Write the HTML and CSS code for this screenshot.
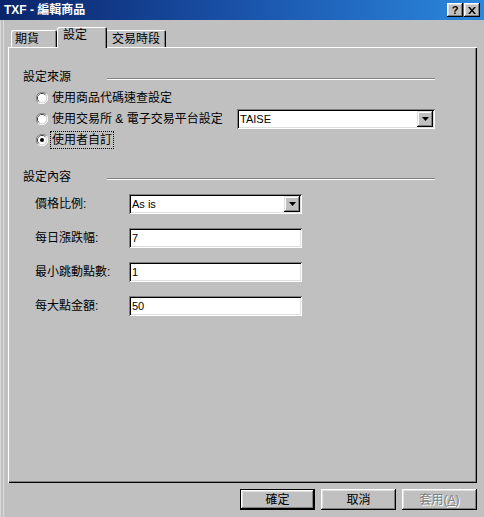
FILE: index.html
```html
<!DOCTYPE html>
<html lang="zh-Hant">
<head>
<meta charset="utf-8">
<title>TXF - 編輯商品</title>
<link rel="stylesheet" href="styles.css">
</head>
<body>
<div class="window">
  <div class="titlebar">
    <span class="title">TXF - 編輯商品</span>
    <span class="tbtn tbtn-help">?</span>
    <span class="tbtn tbtn-close">
      <svg width="8" height="7" viewBox="0 0 8 7"><path d="M0 0h2l2 2.5L6 0h2L5 3.5 8 7H6L4 4.5 2 7H0l3-3.5z" fill="#000"/></svg>
    </span>
  </div>
  <div class="main">
    <div class="tabs">
      <div class="tab tab-first">期貨</div>
      <div class="tab tab-active">設定</div>
      <div class="tab tab-last">交易時段</div>
    </div>
    <div class="panel">
      <div class="group-head">
        <span class="group-label">設定來源</span>
        <span class="etch"></span>
      </div>
      <div class="radios">
        <div class="radio-row">
          <svg class="radio" width="12" height="12" viewBox="0 0 12 12"><path d="M1.76 10.24A6 6 0 0 1 10.24 1.76" stroke="#808080" fill="none"/><path d="M10.24 1.76A6 6 0 0 1 1.76 10.24" stroke="#fff" fill="none"/><circle cx="6" cy="6" r="4.5" fill="#fff" stroke="#dfdfdf"/><path d="M2.82 9.18A4.5 4.5 0 0 1 9.18 2.82" stroke="#404040" fill="none"/><circle cx="6" cy="6" r="4" fill="#fff"/></svg>
          <span class="radio-text">使用商品代碼速查設定</span>
        </div>
        <div class="radio-row">
          <svg class="radio" width="12" height="12" viewBox="0 0 12 12"><path d="M1.76 10.24A6 6 0 0 1 10.24 1.76" stroke="#808080" fill="none"/><path d="M10.24 1.76A6 6 0 0 1 1.76 10.24" stroke="#fff" fill="none"/><circle cx="6" cy="6" r="4.5" fill="#fff" stroke="#dfdfdf"/><path d="M2.82 9.18A4.5 4.5 0 0 1 9.18 2.82" stroke="#404040" fill="none"/><circle cx="6" cy="6" r="4" fill="#fff"/></svg>
          <span class="radio-text radio-text-wide">使用交易所 &amp; 電子交易平台設定</span>
          <div class="combo combo-exchange">
            <span class="combo-value">TAISE</span>
            <span class="drop-btn"><svg width="7" height="4" viewBox="0 0 7 4"><path d="M0 0h7L3.5 4z" fill="#000"/></svg></span>
          </div>
        </div>
        <div class="radio-row">
          <svg class="radio" width="12" height="12" viewBox="0 0 12 12"><path d="M1.76 10.24A6 6 0 0 1 10.24 1.76" stroke="#808080" fill="none"/><path d="M10.24 1.76A6 6 0 0 1 1.76 10.24" stroke="#fff" fill="none"/><circle cx="6" cy="6" r="4.5" fill="#fff" stroke="#dfdfdf"/><path d="M2.82 9.18A4.5 4.5 0 0 1 9.18 2.82" stroke="#404040" fill="none"/><circle cx="6" cy="6" r="4" fill="#fff"/><circle cx="6" cy="6" r="2" fill="#000"/></svg>
          <span class="radio-text focus">使用者自訂</span>
        </div>
      </div>
      <div class="group-head group-head-2">
        <span class="group-label">設定內容</span>
        <span class="etch"></span>
      </div>
      <div class="fields">
        <div class="field-row field-row-combo">
          <span class="field-label">價格比例:</span>
          <div class="combo combo-field">
            <span class="combo-value">As is</span>
            <span class="drop-btn"><svg width="7" height="4" viewBox="0 0 7 4"><path d="M0 0h7L3.5 4z" fill="#000"/></svg></span>
          </div>
        </div>
        <div class="field-row">
          <span class="field-label">每日漲跌幅:</span>
          <div class="textbox">7</div>
        </div>
        <div class="field-row">
          <span class="field-label">最小跳動點數:</span>
          <div class="textbox">1</div>
        </div>
        <div class="field-row">
          <span class="field-label">每大點金額:</span>
          <div class="textbox">50</div>
        </div>
      </div>
    </div>
    <div class="buttons">
      <div class="btn btn-default">確定</div>
      <div class="btn">取消</div>
      <div class="btn btn-disabled">套用(<u>A</u>)</div>
    </div>
  </div>
</div>
</body>
</html>
```
FILE: styles.css
```css
* { box-sizing: border-box; }
html, body { margin: 0; padding: 0; }
body {
  width: 484px;
  height: 517px;
  overflow: hidden;
  background: #c0c0c0;
  font-family: "Liberation Sans", "Noto Sans CJK TC", sans-serif;
  font-size: 12px;
  color: #000;
}
.window {
  width: 484px;
  height: 517px;
  display: flex;
  flex-direction: column;
}
.titlebar {
  height: 20px;
  flex: none;
  display: flex;
  align-items: center;
  padding: 0 4px 0 4px;
  background: linear-gradient(to right, #0a246a 0%, #1c58b0 55%, #2a88dc 100%);
  color: #fff;
  font-weight: bold;
  line-height: 16px;
}
.title { flex: 1; white-space: nowrap; }
.tbtn {
  width: 16px;
  height: 14px;
  background: #c0c0c0;
  box-shadow: inset -1px -1px #000, inset 1px 1px #fff, inset -2px -2px #808080, inset 2px 2px #dfdfdf;
  display: flex;
  align-items: center;
  justify-content: center;
  color: #000;
  font-size: 11px;
  font-weight: bold;
  line-height: 12px;
}
.tbtn-help { padding-bottom: 1px; }
.tbtn-close { margin-left: 1px; }
.main {
  flex: 1;
  display: flex;
  flex-direction: column;
  box-shadow: inset 1px 0 #d8d8d8, inset 3px 0 #c0c0c0, inset 4px 0 #dcdcdc;
}
.tabs {
  height: 27px;
  flex: none;
  display: flex;
  align-items: flex-end;
  padding-left: 11px;
}
.tab {
  height: 17px;
  padding: 2px 0 0 4px;
  line-height: 14px;
  background: #c0c0c0;
  box-shadow: inset 1px 1px #fff, inset -1px 0 #000, inset -2px 0 #808080;
  border-radius: 2px 2px 0 0;
  white-space: nowrap;
}
.tab-first { width: 46px; }
.tab-active {
  width: 50px;
  height: 21px;
  padding: 1px 0 0 6px;
  margin: 0 -2px -1px 0;
  position: relative;
  z-index: 1;
  box-shadow: inset 1px 1px #fff, inset -1px 0 #000, inset -2px 0 #808080;
}
.tab-last { width: 61px; padding-left: 7px; }
.panel {
  margin-left: 8px;
  width: 469px;
  height: 436px;
  flex: none;
  box-shadow: inset 1px 1px #fff, inset -1px -1px #000, inset -2px -2px #808080;
  padding: 22px 42px 0 15px;
  display: flex;
  flex-direction: column;
}
.group-head {
  height: 16px;
  display: flex;
  align-items: center;
  line-height: 16px;
}
.group-label { width: 84px; flex: none; }
.etch {
  flex: 1;
  height: 2px;
  margin-top: 3px;
  border-top: 1px solid #808080;
  border-bottom: 1px solid #fff;
}
.radios {
  margin-top: 2px;
  padding-left: 13px;
  display: flex;
  flex-direction: column;
}
.radio-row {
  height: 21px;
  display: flex;
  align-items: center;
}
.radio { flex: none; display: block; }
.radio-text { margin-left: 4px; line-height: 16px; white-space: nowrap; }
.radio-text-wide { width: 185px; flex: none; }
.focus { outline: 1px dotted #000; outline-offset: 0; padding: 0 1px; margin-left: 3px; }
.group-head-2 { margin-top: 19px; }
.fields {
  margin-top: 8px;
  padding-left: 12px;
  display: flex;
  flex-direction: column;
  gap: 14px;
}
.field-row {
  height: 20px;
  display: flex;
  align-items: center;
}
.field-row-combo { height: 21px; }
.field-label { width: 94px; flex: none; line-height: 16px; }
.combo, .textbox {
  height: 20px;
  background: #fff;
  box-shadow: inset 1px 1px #808080, inset -1px -1px #fff, inset 2px 2px #000, inset -2px -2px #dfdfdf;
  display: flex;
  align-items: center;
  padding: 2px 2px 2px 3px;
  font-size: 11px;
  line-height: 14px;
}
.combo-exchange { width: 200px; }
.combo-field, .textbox { width: 173px; }
.combo-value { flex: 1; }
.drop-btn {
  width: 16px;
  height: 16px;
  flex: none;
  background: #c0c0c0;
  box-shadow: inset -1px -1px #000, inset 1px 1px #dfdfdf, inset -2px -2px #808080, inset 2px 2px #fff;
  display: flex;
  align-items: center;
  justify-content: center;
}
.drop-btn svg { display: block; }
.buttons {
  margin-top: 6px;
  padding-right: 7px;
  display: flex;
  justify-content: flex-end;
  gap: 6px;
}
.btn {
  width: 75px;
  height: 21px;
  display: flex;
  align-items: center;
  justify-content: center;
  background: #c0c0c0;
  box-shadow: inset -1px -1px #000, inset 1px 1px #fff, inset -2px -2px #808080, inset 2px 2px #dfdfdf;
  line-height: 14px;
}
.btn-default {
  box-shadow: inset 0 0 0 1px #000, inset -2px -2px #000, inset 2px 2px #fff, inset -3px -3px #808080, inset 3px 3px #dfdfdf;
}
.btn-disabled { color: #808080; text-shadow: 1px 1px #fff; }
```
